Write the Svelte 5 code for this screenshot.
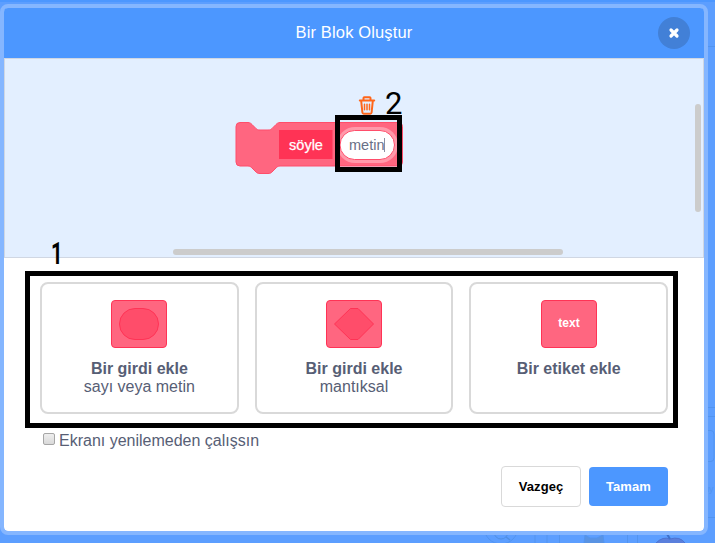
<script>
  const options = [
    { title: 'Bir girdi ekle', note: 'sayı veya metin', shape: 'round' },
    { title: 'Bir girdi ekle', note: 'mantıksal', shape: 'boolean' },
    { title: 'Bir etiket ekle', note: '', shape: 'label' }
  ];
</script>

<div class="page">
  <svg class="backdrop" width="715" height="543" fill="none" stroke="#5294ef" aria-hidden="true">
    <path d="M0 1H715" stroke="#4c97ff" stroke-width="2" />
    <path d="M708 46.5H715M708 407.5H715M708 416.5H715M708 430.5h3q3 0 3 4v23q0 4-3 4h-3M708 517.5H715" />
    <text x="698" y="492" font-size="9" fill="#5294ef" stroke="none">Büy</text>
    <circle cx="501" cy="527" r="17" />
    <circle cx="501" cy="532" r="7" stroke="#508fe3" />
    <path d="M506 537l4 3M498 532h6M501 529v6" stroke="#508fe3" stroke-width="1.5" />
    <path d="M535 535v8M547 535v8M559.500 535v8M627.500 535v8M637.500 535v8" />
    <path d="M584 543l1-8 5 3h7l6-3 1 8" fill="#5993e3" />
    <path d="M656 543q7-7 14-4q10-3 15 4" fill="#5a7fdc" stroke="#4c73d0" />
    <path d="M670 539l-3-5" stroke="#3d70cb" stroke-width="2" />
  </svg>

  <div class="modal">
    <header>
      <span>Bir Blok Oluştur</span>
      <button class="close" aria-label="Kapat">
        <svg width="12" height="12" viewBox="0 0 12 12"><path d="M3 3l6 6M9 3l-6 6" stroke="#fff" stroke-width="3.200" stroke-linecap="round" /></svg>
      </button>
    </header>

    <div class="workspace">
      <svg class="block" width="420" height="120" viewBox="0 0 420 120">
        <g transform="translate(-5 -59)">
          <path d="M240 122.500H248C250 122.500 251 123.500 252 124.500L256 128.500C257 129.500 258 130 260 130H268C270 130 271 129.500 272 128.500L276 124.500C277 123.500 278 122.500 280 122.500H398.500a4 4 0 0 1 4 4V162a4 4 0 0 1-4 4H280C278 166 277 167 276 168L272 172C271 173 270 173.500 268 173.500H260C258 173.500 257 173 256 172L252 168C251 167 250 166 248 166H240a4 4 0 0 1-4-4V126.500a4 4 0 0 1 4-4z" fill="#ff6680" stroke="#ff4d6a" />
          <rect x="279" y="130" width="53.500" height="29" fill="#ff3355" />
          <text x="306" y="150" text-anchor="middle" fill="#fff" font-size="14.500" stroke="#fff" stroke-width=".25">söyle</text>
          <rect x="337" y="127" width="61" height="36" rx="18" fill="#ff99aa" />
          <rect x="340" y="130.500" width="54.500" height="29" rx="14.500" fill="#fff" stroke="#ff4d6a" />
          <text x="349" y="150" fill="#697086" font-size="14.500">metin</text>
          <path d="M384.500 138v14" stroke="#8a8fa0" />
          <g stroke="#ff661a" fill="none" stroke-width="2" stroke-linejoin="round" stroke-linecap="round">
            <path d="M359.800 100.500H374.200M363.500 100V98q0-.8.8-.8h5.400q.8 0 .8.8v2M361.200 101l1.200 11.500q.1 1.200 1.300 1.200h6.600q1.200 0 1.300-1.200L372.800 101" />
            <path d="M364.500 104.200v5.600M367 104.200v5.600M369.500 104.200v5.600" stroke-width="1.500" />
          </g>
        </g>
      </svg>
      <i class="bar vertical"></i>
      <i class="bar horizontal"></i>
    </div>

    <main>
      <div class="options">
        {#each options as option}
          <button class="card">
            <svg width="56" height="48" viewBox="0 0 56 48">
              <rect x=".5" y=".5" width="55" height="47" rx="3.500" fill="#ff6680" stroke="#ff3355" />
              {#if option.shape === 'round'}
                <rect x="8.500" y="8.500" width="39" height="31" rx="15.500" fill="#ff4d6a" stroke="#ff3355" />
              {:else if option.shape === 'boolean'}
                <path d="M8.500 24L24.500 8.500H32L47.500 24L32 39.500H24.500z" fill="#ff4d6a" stroke="#ff3355" />
              {:else}
                <text x="28" y="27" text-anchor="middle" fill="#fff" font-size="12" font-weight="bold">text</text>
              {/if}
            </svg>
            <strong>{option.title}</strong>
            <span>{option.note}</span>
          </button>
        {/each}
      </div>

      <div class="refresh"><i class="checkbox"></i><span>Ekranı yenilemeden çalışsın</span></div>

      <div class="actions">
        <button class="cancel">Vazgeç</button>
        <button class="ok">Tamam</button>
      </div>
    </main>
  </div>

  <div class="frame inputs"></div>
  <div class="frame field"></div>
  <span class="mark one">1</span>
  <span class="mark two">2</span>
</div>

<style>
  :global(body) { margin: 0; }
  .page {
    position: relative;
    box-sizing: border-box;
    width: 715px;
    height: 543px;
    padding-top: 4px;
    overflow: hidden;
    background: #5c9eff;
    font-family: "Liberation Sans", Arial, sans-serif;
  }
  .backdrop { position: absolute; left: 0; top: 0; }
  button { font-family: inherit; box-sizing: border-box; margin: 0; padding: 0; border: 0; }
  .modal {
    position: relative;
    box-sizing: border-box;
    width: 708px;
    height: 531px;
    border: 4px solid #85b6ff;
    border-radius: 8px;
    background: #fff;
    background-clip: padding-box;
    overflow: hidden;
  }
  header {
    position: relative;
    display: flex;
    align-items: center;
    justify-content: center;
    box-sizing: border-box;
    height: 50px;
    padding-bottom: 2px;
    background: #4c97ff;
    color: #fff;
    font-size: 16.500px;
    letter-spacing: .14px;
  }
  .close {
    position: absolute;
    right: 14px;
    top: 9px;
    display: flex;
    align-items: center;
    justify-content: center;
    width: 32px;
    height: 32px;
    border-radius: 50%;
    background: #4280d7;
  }
  .workspace {
    position: relative;
    box-sizing: border-box;
    height: 200px;
    border: 1px solid #d0d7e3;
    background: #e3efff;
  }
  .block { display: block; }
  .bar { position: absolute; border-radius: 3px; background: #ccc; }
  .vertical { right: 2px; top: 45px; width: 6px; height: 108px; }
  .horizontal { left: 168px; top: 190px; width: 390px; height: 6px; }
  main { padding: 24px 36px 0; }
  .options { display: flex; gap: 16px; }
  .card {
    display: flex;
    flex: 1;
    flex-direction: column;
    align-items: center;
    height: 132px;
    padding-top: 16px;
    border: 2px solid #d9d9d9;
    border-radius: 8px;
    background: #fff;
    color: #575e75;
    font-size: 16px;
    line-height: 18px;
  }
  .card svg { margin-bottom: 12px; }
  .refresh {
    display: flex;
    gap: 4px;
    height: 18px;
    margin: 18px 0 0 3px;
    color: #575e75;
    font-size: 16px;
    line-height: 18px;
  }
  .checkbox {
    box-sizing: border-box;
    width: 12px;
    height: 12px;
    margin-top: 1px;
    border: 1px solid #a6a6a6;
    border-radius: 2px;
    background: linear-gradient(#eee, #d9d9d9);
  }
  .actions { display: flex; align-items: center; justify-content: flex-end; gap: 8px; margin-top: 16px; }
  .actions button { border-radius: 4px; font-size: 13px; font-weight: bold; letter-spacing: .1px; }
  .cancel { width: 80px; height: 41px; border: 1px solid #d9d9d9; background: #fff; color: #000; }
  .ok { width: 79px; height: 39px; background: #4c97ff; color: #fff; }
  .frame { position: absolute; box-sizing: border-box; border: 5px solid #000; }
  .inputs { left: 25px; top: 271px; width: 653px; height: 157px; }
  .field { left: 335px; top: 115px; width: 67px; height: 57px; }
  .mark { position: absolute; color: #000; font: 500 31px/36px Roboto, sans-serif; }
  .one { left: 51px; top: 236px; font-weight: 700; transform: scaleX(.65); transform-origin: 0 0; }
  .two { left: 385px; top: 86px; font-weight: 400; }
</style>
